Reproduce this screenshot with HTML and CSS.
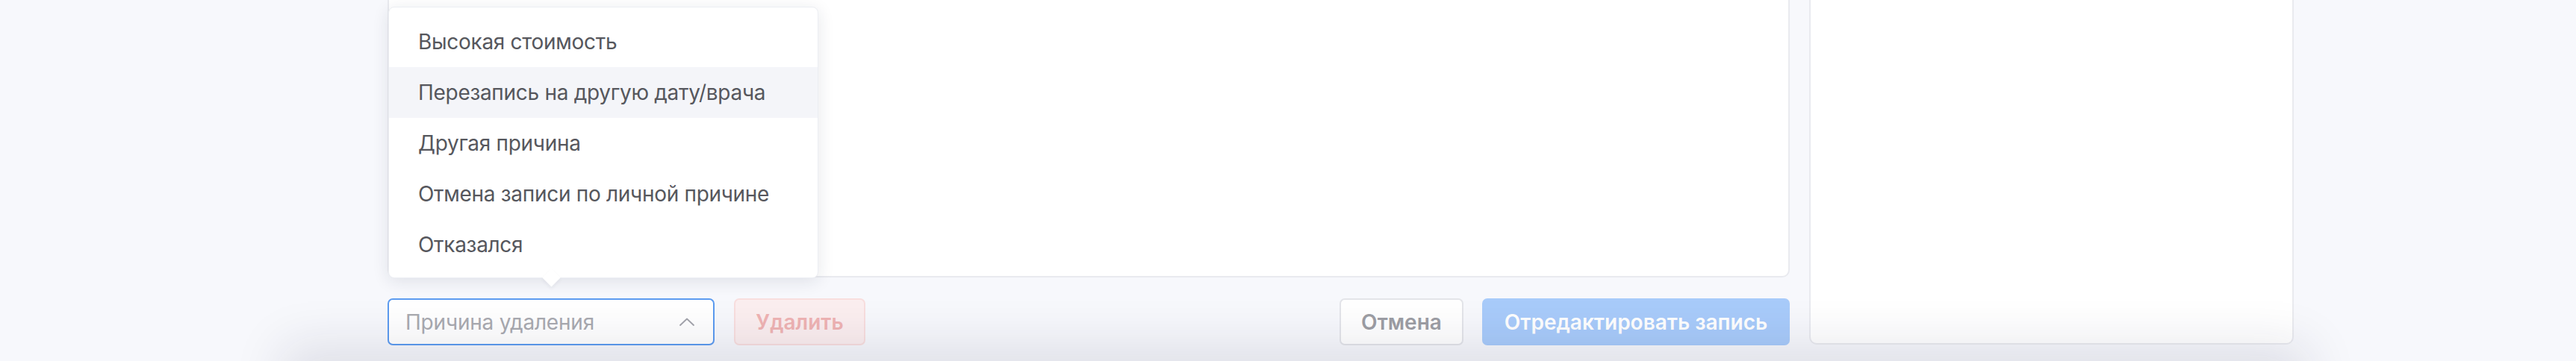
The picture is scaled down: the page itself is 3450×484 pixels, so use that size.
FILE: index.html
```html
<!DOCTYPE html>
<html lang="ru">
<head>
<meta charset="utf-8">
<title>Редактирование записи</title>
<link rel="stylesheet" href="styles.css">
</head>
<body>
<div class="page">
  <div class="main">
    <div class="card"></div>
    <div class="footer">
      <div class="select-wrap">
        <div class="dropdown">
          <div class="option">Высокая стоимость</div>
          <div class="option option-hover">Перезапись на другую дату/врача</div>
          <div class="option">Другая причина</div>
          <div class="option">Отмена записи по личной причине</div>
          <div class="option">Отказался</div>
        </div>
        <div class="select">
          <span class="placeholder">Причина удаления</span>
          <svg class="chevron" width="20" height="11" viewBox="0 0 20 11"><path d="M1 10 L10 1.5 L19 10" fill="none" stroke="#a3a4ab" stroke-width="1.8" stroke-linecap="round" stroke-linejoin="round"/></svg>
        </div>
      </div>
      <button class="btn btn-danger">Удалить</button>
      <div class="spacer"></div>
      <button class="btn btn-cancel">Отмена</button>
      <button class="btn btn-primary">Отредактировать запись</button>
    </div>
  </div>
  <aside class="side"></aside>
</div>
<div class="bottom-shade"></div>
</body>
</html>
```

FILE: styles.css
```css
html, body {
  margin: 0;
  padding: 0;
}
body {
  width: 3450px;
  height: 484px;
  overflow: hidden;
  background: #f7f8fc;
  font-family: Inter, "Noto Sans", "Liberation Sans", sans-serif;
}
.page {
  display: flex;
  align-items: flex-start;
  gap: 26px;
  padding-left: 519px;
  margin-top: -20px;
}
.main {
  width: 1878px;
  display: flex;
  flex-direction: column;
}
.card {
  box-sizing: border-box;
  height: 392px;
  background: #fff;
  border: 2px solid #e9eaef;
  border-radius: 10px;
}
.footer {
  display: flex;
  align-items: stretch;
  height: 63px;
  margin-top: 28px;
}
.select-wrap {
  position: relative;
  width: 438px;
  margin-right: 26px;
}
.select {
  box-sizing: border-box;
  height: 100%;
  display: flex;
  align-items: center;
  justify-content: space-between;
  padding: 0 25px 0 22px;
  background: #fff;
  border: 2px solid #5c9bf0;
  border-radius: 7px;
}
.placeholder {
  font-size: 28px;
  letter-spacing: -0.2px;
  color: #a9aab0;
}
.chevron {
  display: block;
}
.dropdown {
  position: absolute;
  left: 1px;
  bottom: 90px;
  z-index: 10;
  box-sizing: border-box;
  width: 576px;
  padding: 12px 0 10px;
  background: #fff;
  border: 1px solid #eceef3;
  border-radius: 8px;
  box-shadow: 0 4px 22px rgba(30, 35, 60, 0.11);
}
.dropdown::before {
  content: "";
  position: absolute;
  z-index: -1;
  left: 209px;
  bottom: -9px;
  width: 17px;
  height: 17px;
  background: #fff;
  transform: rotate(45deg);
  box-shadow: 2px 2px 5px rgba(30, 35, 60, 0.06);
}
.option {
  height: 68px;
  line-height: 68px;
  padding-left: 39px;
  font-size: 28px;
  letter-spacing: -0.3px;
  color: #56575d;
  white-space: nowrap;
}
.option-hover {
  background: #f4f5f9;
}
.btn {
  box-sizing: border-box;
  height: 63px;
  margin: 0;
  padding: 0;
  font-family: inherit;
  font-size: 28px;
  font-weight: 600;
  border-radius: 7px;
  cursor: pointer;
}
.btn-danger {
  width: 176px;
  background: #fbeeef;
  border: 2px solid #f8dede;
  color: #efb3b3;
}
.spacer {
  flex: 1;
}
.btn-cancel {
  width: 166px;
  margin-right: 25px;
  background: #fff;
  border: 2px solid #e3e4e9;
  color: #9d9ea4;
}
.btn-primary {
  width: 412px;
  background: #a8cbfa;
  border: none;
  color: #fff;
}
.side {
  box-sizing: border-box;
  width: 649px;
  height: 482px;
  background: #fff;
  border: 2px solid #e9eaef;
  border-radius: 10px;
}
.bottom-shade {
  position: fixed;
  left: 400px;
  right: 380px;
  top: 484px;
  height: 200px;
  z-index: 100;
  pointer-events: none;
  box-shadow: 0 0 64px 22px rgba(25, 30, 60, 0.11);
}
```
